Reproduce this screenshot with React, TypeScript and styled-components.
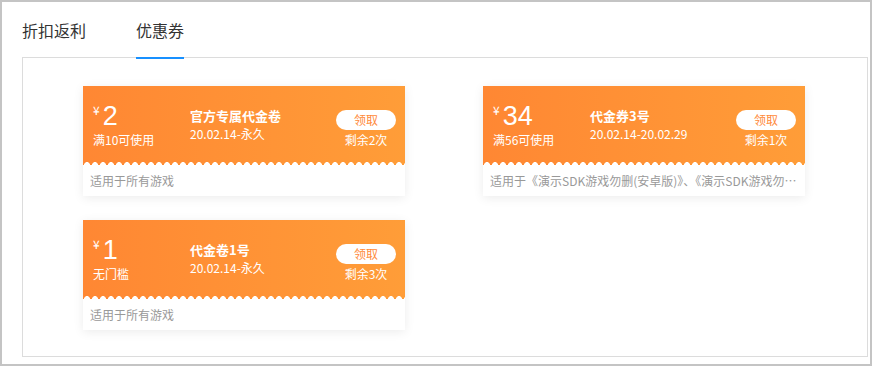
import React from "react";
import styled, { createGlobalStyle } from "styled-components";

const GlobalStyle = createGlobalStyle`
  body {
    margin: 0;
    background: #fff;
    font-family: "Noto Sans CJK SC", "Liberation Sans", sans-serif;
  }
`;

const Frame = styled.div`
  width: 872px;
  height: 366px;
  box-sizing: border-box;
  border: 2px solid #c4c4c4;
  background: #fff;
  display: flex;
  flex-direction: column;
`;

const Tabs = styled.div`
  height: 55px;
  display: flex;
  align-items: center;
  gap: 50px;
  padding-left: 20px;
`;

const Tab = styled.div<{ $active?: boolean }>`
  position: relative;
  height: 100%;
  display: flex;
  align-items: center;
  font-size: 16px;
  color: #333;

  &::after {
    content: "";
    display: ${(p) => (p.$active ? "block" : "none")};
    position: absolute;
    left: 0;
    right: 0;
    bottom: -2px;
    height: 2px;
    background: #1890ff;
    z-index: 2;
  }
`;

const Panel = styled.div`
  margin: 0 2px 0 20px;
  height: 300px;
  box-sizing: border-box;
  border: 1px solid #dcdcdc;
  padding: 28px 0 0 60px;
  display: grid;
  grid-template-columns: 322px 322px;
  grid-auto-rows: 110px;
  column-gap: 78px;
  row-gap: 24px;
  align-content: start;
`;

const Card = styled.div`
  background: #fff;
  box-shadow: 0 2px 10px rgba(0, 0, 0, 0.08);
  display: flex;
  flex-direction: column;
`;

const Head = styled.div`
  position: relative;
  height: 79px;
  box-sizing: border-box;
  padding: 0 9px 0 10px;
  background: linear-gradient(90deg, #ff8733 0%, #ff9d38 100%);
  color: #fff;
  display: flex;
  align-items: center;

  &::after {
    content: "";
    position: absolute;
    left: 0;
    right: 0;
    bottom: 0;
    height: 4px;
    background: radial-gradient(circle at 4px 4px, #fff 2.6px, transparent 3.2px) repeat-x;
    background-size: 8px 4px;
  }
`;

const Amount = styled.div`
  width: 97px;
  display: flex;
  flex-direction: column;
  margin-top: -2px;
`;

const Price = styled.div`
  display: flex;
  align-items: flex-start;
  line-height: 30px;
  height: 30px;
`;

const Yen = styled.span`
  font-size: 12px;
  line-height: 16px;
  margin-right: 3px;
  margin-top: 1px;
`;

const Value = styled.span`
  font-size: 27px;
  font-family: "Liberation Sans", sans-serif;
`;

const Small = styled.div`
  font-size: 12px;
  line-height: 16px;
  margin-top: 1px;
`;

const Info = styled.div`
  flex: 1;
  display: flex;
  flex-direction: column;
  margin-top: -3px;
`;

const Title = styled.div`
  font-size: 13px;
  font-weight: bold;
  line-height: 19px;
`;

const Date = styled.div`
  font-size: 12px;
  line-height: 17px;
`;

const Side = styled.div`
  width: 60px;
  display: flex;
  flex-direction: column;
  align-items: center;
  margin-top: 6px;
`;

const Claim = styled.button`
  width: 60px;
  height: 20px;
  border: none;
  border-radius: 10px;
  background: #fff;
  color: #ff8a3a;
  font-family: inherit;
  font-size: 12px;
  padding: 0;
  line-height: 20px;
`;

const Left = styled.div`
  font-size: 12px;
  line-height: 16px;
  margin-top: 2px;
  white-space: nowrap;
`;

const Foot = styled.div`
  flex: 1;
  padding: 0 8px 0 7px;
  display: flex;
  align-items: center;
  font-size: 12px;
  color: #999;
  min-width: 0;

  span {
    overflow: hidden;
    white-space: nowrap;
    text-overflow: ellipsis;
  }
`;

type Coupon = {
  value: string;
  cond: string;
  title: string;
  date: string;
  left: number;
  scope: string;
};

const coupons: Coupon[] = [
  { value: "2", cond: "满10可使用", title: "官方专属代金卷", date: "20.02.14-永久", left: 2, scope: "适用于所有游戏" },
  {
    value: "34",
    cond: "满56可使用",
    title: "代金券3号",
    date: "20.02.14-20.02.29",
    left: 1,
    scope: "适用于《演示SDK游戏勿删(安卓版)》、《演示SDK游戏勿删(iOS版)》",
  },
  { value: "1", cond: "无门槛", title: "代金卷1号", date: "20.02.14-永久", left: 3, scope: "适用于所有游戏" },
];

const CouponCard: React.FC<{ c: Coupon }> = ({ c }) => (
  <Card>
    <Head>
      <Amount>
        <Price>
          <Yen>¥</Yen>
          <Value>{c.value}</Value>
        </Price>
        <Small>{c.cond}</Small>
      </Amount>
      <Info>
        <Title>{c.title}</Title>
        <Date>{c.date}</Date>
      </Info>
      <Side>
        <Claim>领取</Claim>
        <Left>剩余{c.left}次</Left>
      </Side>
    </Head>
    <Foot>
      <span>{c.scope}</span>
    </Foot>
  </Card>
);

const App: React.FC = () => (
  <>
    <GlobalStyle />
    <Frame>
      <Tabs>
        <Tab>折扣返利</Tab>
        <Tab $active>优惠券</Tab>
      </Tabs>
      <Panel>
        {coupons.map((c) => (
          <CouponCard key={c.value} c={c} />
        ))}
      </Panel>
    </Frame>
  </>
);

export default App;
